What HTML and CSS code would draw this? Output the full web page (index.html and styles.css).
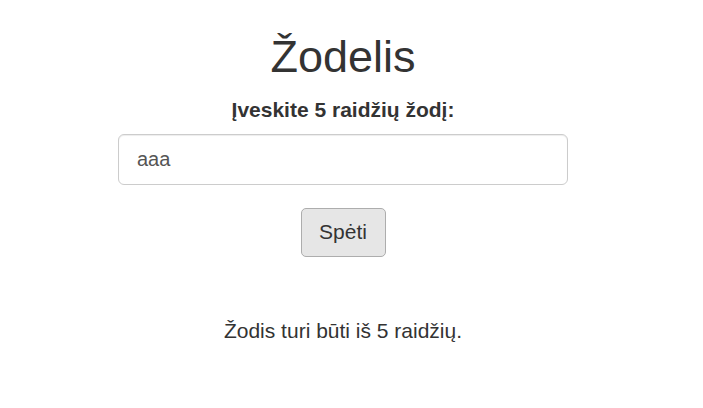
FILE: index.html
```html
<!DOCTYPE html>
<html lang="lt">
<head>
<meta charset="utf-8">
<title>Žodelis</title>
<link rel="stylesheet" href="styles.css">
</head>
<body>
<main class="app">
  <h1 class="title">Žodelis</h1>
  <form class="guess-form">
    <label class="guess-label" for="word">Įveskite 5 raidžių žodį:</label>
    <input class="guess-input" id="word" type="text" value="aaa">
    <button class="guess-btn" type="button">Spėti</button>
  </form>
  <p class="message">Žodis turi būti iš 5 raidžių.</p>
</main>
</body>
</html>
```
FILE: styles.css
```css
html, body {
  margin: 0;
  padding: 0;
  background: #fff;
}
body {
  font-family: "Liberation Sans", Arial, sans-serif;
  color: #333;
}
.app {
  width: 686px;
  display: flex;
  flex-direction: column;
  align-items: center;
  text-align: center;
}
.title {
  font-size: 45px;
  font-weight: normal;
  line-height: 1.1;
  margin: 32px 0 0;
}
.guess-form {
  display: flex;
  flex-direction: column;
  align-items: center;
}
.guess-label {
  font-size: 21px;
  font-weight: bold;
  line-height: 1.4;
  margin-top: 13px;
}
.guess-input {
  box-sizing: border-box;
  width: 450px;
  height: 51px;
  margin-top: 10px;
  padding: 0 18px;
  border: 1px solid #ccc;
  border-radius: 6px;
  font-family: inherit;
  font-size: 20px;
  color: #555;
  box-shadow: inset 0 1px 1px rgba(0,0,0,.075);
  outline: none;
}
.guess-btn {
  box-sizing: border-box;
  margin-top: 23px;
  width: 85px;
  height: 49px;
  padding: 0;
  background: #e6e6e6;
  border: 1px solid #adadad;
  border-radius: 5px;
  font-family: inherit;
  font-size: 21px;
  color: #333;
}
.message {
  font-size: 21px;
  margin: 59px 0 0;
  line-height: 1.4;
}
```
